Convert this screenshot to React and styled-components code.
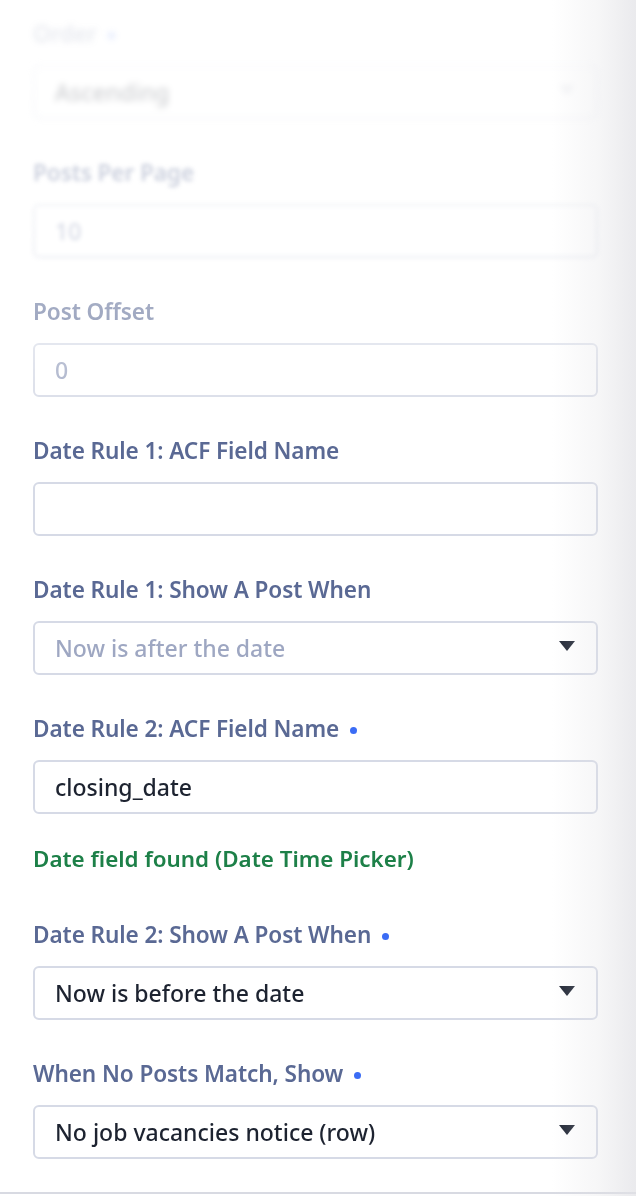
import React from "react";
import styled, { createGlobalStyle } from "styled-components";

const GlobalStyle = createGlobalStyle`
  html, body {
    margin: 0;
    padding: 0;
    background: #ffffff;
  }
  body {
    font-family: "Noto Sans", "Open Sans", sans-serif;
  }
`;

const Panel = styled.div`
  position: relative;
  width: 636px;
  height: 1196px;
  overflow: hidden;
  background: #ffffff;
  display: flex;
  flex-direction: column;

  &::after {
    content: "";
    position: absolute;
    top: 0;
    right: 0;
    bottom: 0;
    width: 84px;
    pointer-events: none;
    background: linear-gradient(
      to right,
      rgba(226, 226, 230, 0),
      rgba(226, 226, 230, 0.3) 55%,
      rgba(226, 226, 230, 0.72)
    );
  }
`;

const Form = styled.div`
  flex: 1;
  display: flex;
  flex-direction: column;
  gap: 39px;
  padding: 19px 38px 0 33px;
  -webkit-mask-image: linear-gradient(to bottom, rgba(0,0,0,0.1) 0px, rgba(0,0,0,0.35) 200px, rgba(0,0,0,0.6) 330px, #000 440px);
  mask-image: linear-gradient(to bottom, rgba(0,0,0,0.1) 0px, rgba(0,0,0,0.35) 200px, rgba(0,0,0,0.6) 330px, #000 440px);
`;

const Field = styled.div`
  display: flex;
  flex-direction: column;
  filter: ${(p) => (p.$blur ? `blur(${p.$blur}px)` : "none")};
`;

const Label = styled.div`
  display: flex;
  align-items: center;
  gap: 11px;
  height: 28px;
  margin-bottom: 18px;
  font-size: 22.6px;
  font-weight: 600;
  letter-spacing: -0.1px;
  color: #5a6994;
  white-space: nowrap;
`;

const Dot = styled.span`
  width: 7px;
  height: 7px;
  border-radius: 50%;
  background: #3b6cf5;
  margin-top: 5px;
`;

const Box = styled.div`
  box-sizing: border-box;
  height: 54px;
  display: flex;
  align-items: center;
  justify-content: space-between;
  padding: 0 21px 0 20px;
  border: 2px solid #d6dae6;
  border-radius: 6px;
  background: #ffffff;
  font-size: 23px;
  font-weight: 500;
  color: ${(p) => (p.$muted ? "#9ea7c2" : "#1d2330")};
`;

const Caret = styled.span`
  width: 0;
  height: 0;
  margin-top: -4px;
  border-left: 8px solid transparent;
  border-right: 8px solid transparent;
  border-top: 10px solid ${(p) => (p.$light ? "#c9cdd6" : "#1f2533")};
`;

const Help = styled.div`
  margin-top: 31px;
  margin-bottom: 8px;
  height: 28px;
  line-height: 28px;
  font-size: 22.4px;
  font-weight: 600;
  color: #1d8048;
`;

const Footer = styled.div`
  height: 2px;
  margin-bottom: 2px;
  background: #d8dae2;
`;

const fields = [
  { label: "Order", dot: true, value: "Ascending", select: true, blur: 3 },
  { label: "Posts Per Page", value: "10", muted: true, blur: 2 },
  { label: "Post Offset", value: "0", muted: true },
  { label: "Date Rule 1: ACF Field Name", value: "" },
  { label: "Date Rule 1: Show A Post When", value: "Now is after the date", muted: true, select: true },
  { label: "Date Rule 2: ACF Field Name", dot: true, value: "closing_date", help: "Date field found (Date Time Picker)" },
  { label: "Date Rule 2: Show A Post When", dot: true, value: "Now is before the date", select: true },
  { label: "When No Posts Match, Show", dot: true, value: "No job vacancies notice (row)", select: true },
];

export default function App() {
  return (
    <>
      <GlobalStyle />
      <Panel>
        <Form>
          {fields.map((f) => (
            <Field key={f.label} $blur={f.blur}>
              <Label>
                {f.label}
                {f.dot && <Dot />}
              </Label>
              <Box $muted={f.muted}>
                <span>{f.value}</span>
                {f.select && <Caret $light={!!f.blur} />}
              </Box>
              {f.help && <Help>{f.help}</Help>}
            </Field>
          ))}
        </Form>
        <Footer />
      </Panel>
    </>
  );
}
